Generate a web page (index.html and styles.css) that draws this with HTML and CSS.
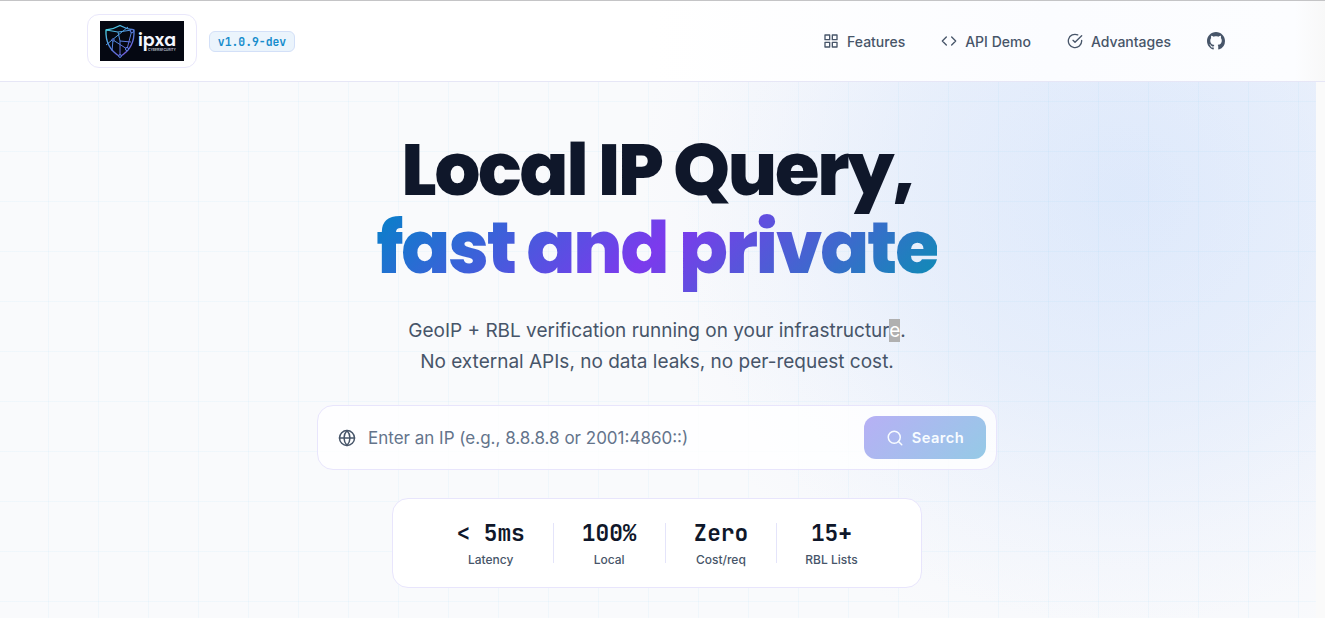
FILE: index.html
```html
<!DOCTYPE html>
<html lang="en">
<head>
    <meta charset="UTF-8">
    <meta name="viewport" content="width=device-width, initial-scale=1.0">
    <title>ipxa - Local IP Query</title>
    <link rel="stylesheet" href="styles.css">
</head>
<body>

    <header class="header">
        <div class="brand">
            <a href="#" class="logo">
                <svg width="84" height="40" viewBox="0 0 84 40">
                    <defs>
                        <linearGradient id="shield" gradientUnits="userSpaceOnUse" x1="8" y1="5" x2="28" y2="35">
                            <stop offset="0" stop-color="#4ce0e8"/>
                            <stop offset=".5" stop-color="#5285df"/>
                            <stop offset="1" stop-color="#7654d8"/>
                        </linearGradient>
                    </defs>
                    <rect width="84" height="40" fill="#050812"/>
                    <g fill="none" stroke="url(#shield)" stroke-width="1" stroke-linejoin="round">
                        <path stroke-width="1.3" d="M20 4.500Q13 8.500 6 9Q5 27 20 35.500Q35 27 34 9Q27 8.500 20 4.500Z"/>
                        <path d="M6 24L28 6M6 9L18 11L32 9L27 28L13 19M13 19L12 30M18 11L20 20L20 35M20 20L31 21"/>
                    </g>
                    <g fill="#101b42" stroke="#5c7fe2">
                        <circle cx="32" cy="10" r="1.800"/>
                        <circle cx="27" cy="28" r="1.600"/>
                        <circle cx="20" cy="35" r="1.400"/>
                        <circle cx="13" cy="19" r="1.200"/>
                    </g>
                    <text class="logo-name" x="38" y="25" textLength="38" lengthAdjust="spacingAndGlyphs">ipxa</text>
                    <text class="logo-sub" x="48" y="30" textLength="28" lengthAdjust="spacingAndGlyphs">CYBERSECURITY</text>
                </svg>
            </a>
            <span class="version">v1.0.9-dev</span>
        </div>

        <nav class="nav">
            <a href="#features">
                <svg class="icon" viewBox="0 0 24 24"><rect x="3" y="3" width="7" height="7"/><rect x="14" y="3" width="7" height="7"/><rect x="14" y="14" width="7" height="7"/><rect x="3" y="14" width="7" height="7"/></svg>
                <span>Features</span>
            </a>
            <a href="#demo">
                <svg class="icon" viewBox="0 0 24 24"><path d="M16 18l6-6-6-6M8 6l-6 6 6 6"/></svg>
                <span>API Demo</span>
            </a>
            <a href="#advantages">
                <svg class="icon" viewBox="0 0 24 24"><path d="M22 11.080V12a10 10 0 1 1-5.930-9.140"/><path d="M22 4L12 14.010l-3-3"/></svg>
                <span>Advantages</span>
            </a>
            <a href="#" aria-label="GitHub">
                <svg class="github" viewBox="0 0 16 16"><path d="M8 0C3.580 0 0 3.580 0 8c0 3.540 2.290 6.530 5.470 7.590.4.070.55-.17.55-.38 0-.19-.01-.82-.01-1.490-2.010.37-2.530-.49-2.690-.94-.09-.23-.48-.94-.82-1.130-.28-.15-.68-.52-.01-.53.63-.01 1.080.58 1.230.82.72 1.210 1.870.87 2.330.66.07-.52.28-.87.51-1.070-1.780-.2-3.640-.89-3.640-3.950 0-.87.31-1.590.82-2.150-.08-.2-.36-1.020.08-2.120 0 0 .67-.21 2.200.82.64-.18 1.320-.27 2-.27s1.360.09 2 .27c1.530-1.040 2.200-.82 2.200-.82.44 1.100.16 1.920.08 2.120.51.56.82 1.270.82 2.150 0 3.070-1.870 3.750-3.650 3.950.29.25.54.73.54 1.480 0 1.070-.01 1.930-.01 2.200 0 .21.15.46.55.38A8.010 8.010 0 0 0 16 8c0-4.420-3.580-8-8-8z"/></svg>
            </a>
        </nav>
    </header>

    <main class="hero">
        <h1>
            Local IP Query,<br>
            <span class="gradient">fast and private</span>
        </h1>

        <p class="subtitle">
            GeoIP + RBL verification running on your infrastructur<span class="selected">e</span>.<br>
            No external APIs, no data leaks, no per-request cost.
        </p>

        <form class="search">
            <svg class="globe" viewBox="0 0 24 24"><circle cx="12" cy="12" r="10"/><path d="M2 12h20M12 2a15.300 15.300 0 0 1 4 10 15.300 15.300 0 0 1-4 10 15.300 15.300 0 0 1-4-10 15.300 15.300 0 0 1 4-10z"/></svg>
            <input type="text" placeholder="Enter an IP (e.g., 8.8.8.8 or 2001:4860::)">
            <button type="button">
                <svg viewBox="0 0 24 24"><circle cx="11" cy="11" r="8"/><path d="M21 21l-4.350-4.350"/></svg>
                <span>Search</span>
            </button>
        </form>

        <div class="stats">
            <div class="stat">
                <span class="value">&lt; 5ms</span>
                <span class="label">Latency</span>
            </div>
            <div class="divider"></div>
            <div class="stat">
                <span class="value">100%</span>
                <span class="label">Local</span>
            </div>
            <div class="divider"></div>
            <div class="stat">
                <span class="value">Zero</span>
                <span class="label">Cost/req</span>
            </div>
            <div class="divider"></div>
            <div class="stat">
                <span class="value">15+</span>
                <span class="label">RBL Lists</span>
            </div>
        </div>
    </main>

</body>
</html>
```

FILE: styles.css
```css
* {
    box-sizing: border-box;
}
body {
    margin: 0;
    height: 618px;
    overflow: hidden;
    background: #fafafa;
    color: #0f172a;
    font-family: Inter, sans-serif;
}

/* Header */
.header {
    height: 82px;
    padding: 0 100px 0 87px;
    display: flex;
    align-items: center;
    justify-content: space-between;
    border-top: 1px solid #c4c4c6;
    border-bottom: 1px solid #e6e6f6;
    background: linear-gradient(90deg, #fff 0, #fff 650px, #fbfcff 1050px, #fcfdff 1295px, #f8f8f8 1325px);
}
.brand {
    display: flex;
    align-items: center;
    gap: 12px;
}
.logo {
    width: 110px;
    height: 54px;
    display: flex;
    align-items: center;
    justify-content: center;
    border: 1px solid #e9e7fb;
    border-radius: 12px;
    background: #fff;
}
.logo-name {
    fill: #f4f7ff;
    font-family: Poppins, Inter, sans-serif;
    font-size: 18px;
    font-weight: 600;
}
.logo-sub {
    fill: #c0c6d6;
    font-family: Inter, sans-serif;
    font-size: 3.5px;
    font-weight: 600;
}
.version {
    width: 86px;
    height: 21px;
    border: 1px solid #d3e0f8;
    border-radius: 6px;
    background: #ebf4fc;
    color: #168ccc;
    font: 600 11.400px/19px "JetBrains Mono", "DejaVu Sans Mono", monospace;
    text-align: center;
}
.nav {
    display: flex;
    align-items: center;
    gap: 36px;
}
.nav a {
    display: flex;
    align-items: center;
    gap: 8px;
    color: #475569;
    font-size: 14px;
    font-weight: 500;
    text-decoration: none;
}
.icon,
.globe,
.search button svg {
    fill: none;
    stroke: currentColor;
    stroke-width: 2;
    stroke-linecap: round;
    stroke-linejoin: round;
}
.icon {
    width: 16px;
    height: 16px;
}
.github {
    width: 18px;
    height: 18px;
    fill: currentColor;
}

/* Hero */
.hero {
    width: 1316px;
    height: 536px;
    padding: 49px 2px 0 0;
    display: flex;
    flex-direction: column;
    align-items: center;
    background:
        linear-gradient(90deg, rgba(14, 165, 233, 0.040) 1px, transparent 1px) 48px 0 / 50px 50px,
        linear-gradient(rgba(14, 165, 233, 0.040) 1px, transparent 1px) 0 19px / 50px 50px,
        radial-gradient(ellipse 440px 430px at 1120px 115px, rgba(170, 207, 246, 0.240), rgba(170, 207, 246, 0.150) 45%, rgba(170, 207, 246, 0.040) 80%, transparent),
        radial-gradient(ellipse 500px 480px at 1140px 105px, rgba(199, 210, 254, 0.220), rgba(199, 210, 254, 0.150) 50%, transparent),
        #f9fafc;
}
h1 {
    margin: 0;
    font-family: Poppins, Inter, sans-serif;
    font-size: 72px;
    font-weight: 800;
    line-height: 78px;
    letter-spacing: -2.160px;
    text-align: center;
    white-space: nowrap;
}
.gradient {
    background: linear-gradient(135deg, #0284c7 0%, #7c3aed 50%, #0891b2 100%);
    -webkit-background-clip: text;
    background-clip: text;
    color: transparent;
}
.subtitle {
    margin: 28px 0 0;
    color: #475569;
    font-size: 19px;
    line-height: 31px;
    text-align: center;
}
.selected {
    background: #b0b0b0;
    color: #fff;
}

/* Search box */
.search {
    width: 680px;
    height: 65px;
    margin-top: 28px;
    padding: 0 10px 0 20px;
    display: flex;
    align-items: center;
    border: 1px solid #e8e5fc;
    border-radius: 16px;
    background: rgba(255, 255, 255, 0.800);
}
.globe {
    width: 18px;
    height: 18px;
    color: #475569;
}
.search input {
    flex: 1;
    min-width: 0;
    margin: 0 12px;
    padding: 0;
    border: 0;
    outline: 0;
    background: transparent;
    font: 17px Inter, sans-serif;
}
.search input::placeholder {
    color: #64748b;
}
.search button {
    width: 122px;
    height: 43px;
    display: flex;
    align-items: center;
    justify-content: center;
    gap: 8px;
    border: 0;
    border-radius: 12px;
    background: linear-gradient(135deg, #b7b0f5, #95cae6);
    color: #f8fcff;
    font: 600 14.700px Inter, sans-serif;
    letter-spacing: 0.450px;
}
.search button svg {
    width: 18px;
    height: 18px;
}

/* Stats */
.stats {
    width: 530px;
    height: 90px;
    margin-top: 28px;
    display: flex;
    align-items: center;
    justify-content: center;
    gap: 28px;
    border: 1px solid #e8e5fc;
    border-radius: 16px;
    background: #fff;
}
.stat {
    display: flex;
    flex-direction: column;
    align-items: center;
}
.value {
    font: bold 22.800px/30px "JetBrains Mono", "DejaVu Sans Mono", monospace;
}
.label {
    margin-top: 3px;
    color: #475569;
    font-size: 12px;
    font-weight: 500;
    line-height: 18px;
}
.divider {
    width: 1px;
    height: 40px;
    background: #e4e4fa;
}
```
